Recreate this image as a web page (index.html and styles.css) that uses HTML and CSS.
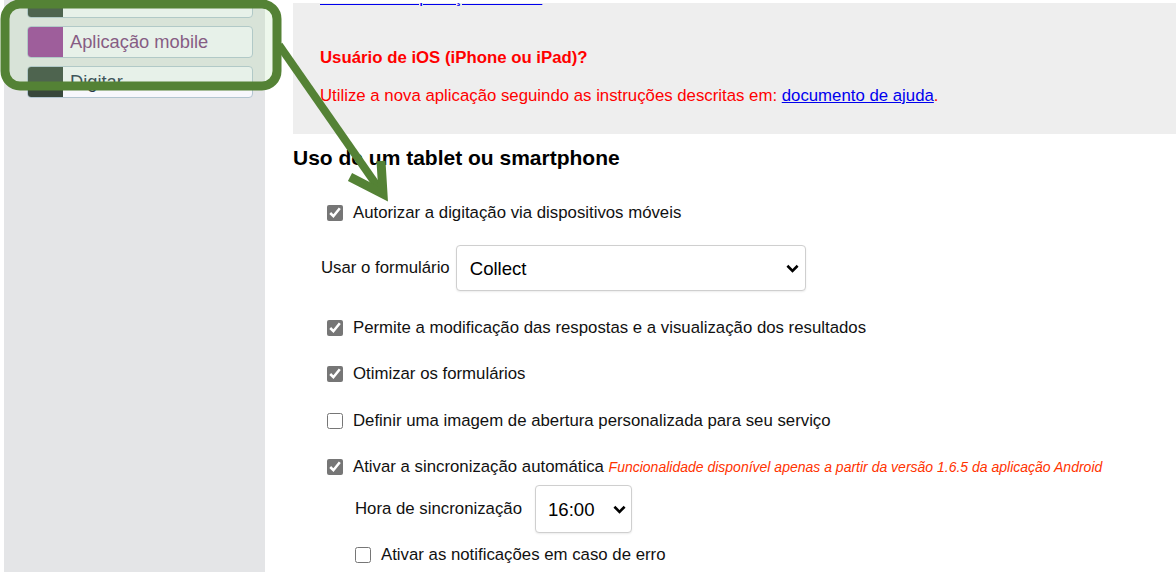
FILE: index.html
```html
<!DOCTYPE html>
<html lang="pt">
<head>
    <meta charset="UTF-8">
    <meta name="viewport" content="width=device-width, initial-scale=1.0">
    <title>Aplicação mobile</title>
    <link rel="stylesheet" href="styles.css">
</head>
<body>
    <div class="page">
        <aside class="sidebar">
            <ul class="menu">
                <li class="menu-item first"><span class="swatch dark"></span><span class="menu-label">Questionários</span></li>
                <li class="menu-item active"><span class="swatch purple"></span><span class="menu-label">Aplicação mobile</span></li>
                <li class="menu-item"><span class="swatch dark"></span><span class="menu-label">Digitar</span></li>
            </ul>
        </aside>

        <main class="content">
            <div class="notice">
                <p class="notice-top"><a href="#">Transferir a aplicação Android</a></p>
                <p class="notice-title">Usuário de iOS (iPhone ou iPad)?</p>
                <p class="notice-text">Utilize a nova aplicação seguindo as instruções descritas em: <a href="#">documento de ajuda</a>.</p>
            </div>

            <h2 class="section-title">Uso de um tablet ou smartphone</h2>

            <label class="row row-first"><input type="checkbox" checked><span>Autorizar a digitação via dispositivos móveis</span></label>

            <div class="row row-select">
                <span class="field-label">Usar o formulário</span>
                <span class="select-wrap wide">
                    <select><option>Collect</option></select>
                    <svg class="chevron" viewBox="0 0 14 9"><path d="M1.5 1.5 L7 7 L12.5 1.5"/></svg>
                </span>
            </div>

            <label class="row gap-lg"><input type="checkbox" checked><span>Permite a modificação das respostas e a visualização dos resultados</span></label>
            <label class="row"><input type="checkbox" checked><span>Otimizar os formulários</span></label>
            <label class="row gap-lg"><input type="checkbox"><span>Definir uma imagem de abertura personalizada para seu serviço</span></label>
            <label class="row"><input type="checkbox" checked><span>Ativar a sincronização automática <em class="warning">Funcionalidade disponível apenas a partir da versão 1.6.5 da aplicação Android</em></span></label>

            <div class="row sub row-hour">
                <span class="field-label">Hora de sincronização</span>
                <span class="select-wrap short">
                    <select><option>16:00</option></select>
                    <svg class="chevron" viewBox="0 0 14 9"><path d="M1.5 1.5 L7 7 L12.5 1.5"/></svg>
                </span>
            </div>

            <label class="row sub row-notify"><input type="checkbox"><span>Ativar as notificações em caso de erro</span></label>
        </main>
    </div>

    <!-- destaque do tutorial -->
    <svg class="annotation" width="1176" height="572" viewBox="0 0 1176 572">
        <rect x="5" y="4" width="272" height="82" rx="15" ry="15" fill="rgba(170,220,160,0.2)" stroke="#548235" stroke-width="9"/>
        <path d="M279 45 L380 190" fill="none" stroke="#548235" stroke-width="8"/>
        <path d="M350 177 L383 194 L381 161" fill="none" stroke="#548235" stroke-width="9" stroke-linejoin="miter"/>
    </svg>
</body>
</html>
```

FILE: styles.css
```css
body {
    margin: 0;
    background: white;
    font-family: "Liberation Sans", Arial, sans-serif;
    font-size: 16.8px;
    color: #111;
    position: relative;
    overflow: hidden;
}
.page {
    display: flex;
    height: 572px;
    padding-left: 4px;
}
.sidebar {
    width: 261px;
    flex-shrink: 0;
    background: #e4e5e7;
    overflow: hidden;
}
.menu {
    list-style: none;
    margin: -40px 0 0 0;
    padding: 0 12px 0 23px;
    display: flex;
    flex-direction: column;
    gap: 8px;
}
.menu-item {
    display: flex;
    align-items: stretch;
    height: 32px;
    box-sizing: border-box;
    border: 1px solid #b3c5d1;
    border-radius: 4px;
    background: #f7f7fc;
    overflow: hidden;
}
.menu-item.first {
    height: 58px;
}
.swatch {
    width: 35px;
    flex-shrink: 0;
}
.swatch.dark {
    background: #38473b;
}
.swatch.purple {
    background: #9c3f9a;
}
.menu-label {
    display: flex;
    align-items: center;
    padding-left: 7px;
    font-size: 18.3px;
    color: #24344a;
}
.active .menu-label {
    color: #7e3d7d;
}
.content {
    flex: 1;
    margin-left: 28px;
}
.notice {
    margin-top: 3px;
    background: #eeeeee;
    padding: 0 0 28px 27px;
    overflow: hidden;
    color: #ff0000;
}
.notice p {
    margin: 0;
}
.notice a {
    color: #0000ee;
}
.notice-top {
    margin-top: -15px !important;
}
.notice-title {
    margin-top: 40px !important;
    font-weight: bold;
}
.notice-text {
    margin-top: 18px !important;
}
.section-title {
    margin: 12px 0 0 0;
    font-size: 21px;
    line-height: 24px;
    color: #000;
}
.row {
    display: flex;
    align-items: center;
    min-height: 20px;
    margin-top: 26px;
    padding-left: 34px;
    white-space: nowrap;
}
.row.gap-lg {
    margin-top: 27px;
}
.row input[type="checkbox"] {
    width: 16px;
    height: 16px;
    margin: 0 10px 0 0;
    accent-color: #767676;
    flex-shrink: 0;
}
.row-first {
    margin-top: 33px;
}
.row-select {
    margin-top: 22px;
    padding-left: 28px;
}
.field-label {
    margin-right: 6px;
}
.sub {
    padding-left: 62px;
}
.row-hour {
    margin-top: 8px;
}
.row-hour .field-label {
    margin-right: 13px;
}
.row-notify {
    margin-top: 12px;
}
.warning {
    font-size: 14px;
    color: #ff3300;
}
.select-wrap {
    position: relative;
    display: block;
}
.select-wrap select {
    appearance: none;
    -webkit-appearance: none;
    background: white;
    border: 1px solid #cfcfcf;
    border-radius: 4px;
    box-shadow: 0 1px 2px rgba(0, 0, 0, 0.08);
    font-family: "Liberation Sans", Arial, sans-serif;
    font-size: 18.6px;
    color: #000;
    box-sizing: border-box;
    display: block;
}
.wide select {
    width: 350px;
    height: 46px;
    padding-left: 13px;
}
.short select {
    width: 97px;
    height: 48px;
    padding-left: 12px;
}
.chevron {
    position: absolute;
    top: 50%;
    width: 13px;
    height: 9px;
    margin-top: -4px;
    fill: none;
    stroke: #000;
    stroke-width: 2.8;
    pointer-events: none;
}
.wide .chevron {
    right: 7px;
}
.short .chevron {
    right: 6px;
}
.annotation {
    position: absolute;
    top: 0;
    left: 0;
    pointer-events: none;
}
```
